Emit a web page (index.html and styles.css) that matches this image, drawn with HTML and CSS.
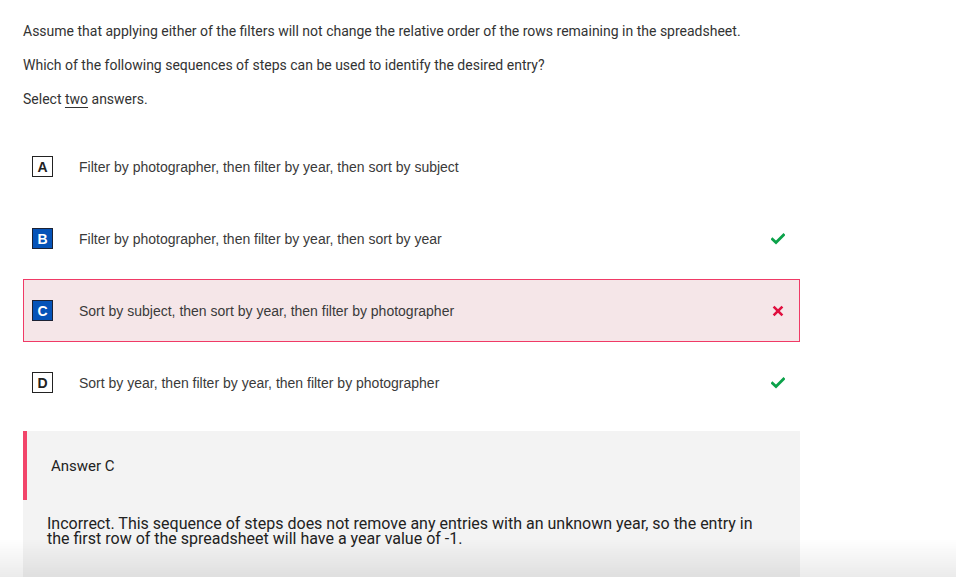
FILE: index.html
```html
<!DOCTYPE html>
<html>
<head>
<meta charset="utf-8">
<link rel="stylesheet" href="styles.css">
</head>
<body>
<div class="page">
  <div class="question">
    <p>Assume that applying either of the filters will not change the relative order of the rows remaining in the spreadsheet.</p>
    <p>Which of the following sequences of steps can be used to identify the desired entry?</p>
    <p>Select <span class="ul">two</span> answers.</p>
  </div>
  <div class="options">
    <div class="option">
      <span class="badge">A</span>
      <span class="otext">Filter by photographer, then filter by year, then sort by subject</span>
    </div>
    <div class="option">
      <span class="badge selected">B</span>
      <span class="otext">Filter by photographer, then filter by year, then sort by year</span>
      <svg class="mark" width="14" height="12" viewBox="0 0 14 12"><path d="M1.5 6.2 L5 9.5 L12.5 2" fill="none" stroke="#0ba24a" stroke-width="2.8" stroke-linecap="square"/></svg>
    </div>
    <div class="option wrong">
      <span class="badge selected">C</span>
      <span class="otext">Sort by subject, then sort by year, then filter by photographer</span>
      <svg class="mark" width="14" height="12" viewBox="0 0 14 12"><path d="M2.6 1.6 L11.4 10.4 M11.4 1.6 L2.6 10.4" fill="none" stroke="#e0103f" stroke-width="2.6"/></svg>
    </div>
    <div class="option">
      <span class="badge">D</span>
      <span class="otext">Sort by year, then filter by year, then filter by photographer</span>
      <svg class="mark" width="14" height="12" viewBox="0 0 14 12"><path d="M1.5 6.2 L5 9.5 L12.5 2" fill="none" stroke="#0ba24a" stroke-width="2.8" stroke-linecap="square"/></svg>
    </div>
  </div>
  <div class="feedback">
    <div class="fb-head">Answer C</div>
    <div class="fb-body">Incorrect. This sequence of steps does not remove any entries with an unknown year, so the entry in the first row of the spreadsheet will have a year value of -1.</div>
  </div>
</div>
<div class="shade"></div>
</body>
</html>
```
FILE: styles.css
```css
html, body {
  margin: 0;
  padding: 0;
  background: #ffffff;
}
body {
  font-family: Roboto, "Liberation Sans", Arial, sans-serif;
  color: #333333;
  overflow: hidden;
}
.page {
  padding: 21px 0 0 23px;
  width: 777px;
}
.question p {
  margin: 0 0 14px 0;
  font-size: 14px;
  line-height: 20px;
  color: #333333;
}
.ul {
  text-decoration: underline;
  text-underline-offset: 3px;
}
.options {
  margin-top: 26px;
}
.option {
  display: flex;
  align-items: center;
  height: 63px;
  box-sizing: border-box;
  border: 1px solid transparent;
  padding: 0 14px 0 8px;
  margin-bottom: 9px;
}
.option.wrong {
  background: #f5e6e8;
  border-color: #f03a66;
}
.badge {
  width: 21px;
  height: 21px;
  box-sizing: border-box;
  border: 1px solid #222222;
  display: flex;
  align-items: center;
  justify-content: center;
  font-family: "Liberation Sans", Arial, sans-serif;
  font-weight: bold;
  font-size: 14px;
  color: #222222;
  background: #ffffff;
  margin-right: 26px;
  flex: none;
}
.badge.selected {
  background: #0553b8;
  color: #ffffff;
  border-color: #1c2233;
}
.otext {
  font-family: "Liberation Sans", Arial, sans-serif;
  font-size: 14px;
  color: #3a3a3a;
  flex: 1;
}
.mark {
  flex: none;
}
.feedback {
  margin-top: 17px;
  background: #f3f3f3;
  height: 200px;
}
.fb-head {
  height: 69px;
  border-left: 4px solid #f2456a;
  padding-left: 24px;
  display: flex;
  align-items: center;
  font-size: 15px;
  color: #222222;
}
.fb-body {
  padding: 16px 24px 0 24px;
  font-size: 16px;
  line-height: 15px;
  color: #222222;
}
.shade {
  position: fixed;
  left: 0;
  right: 0;
  bottom: 0;
  height: 38px;
  background: linear-gradient(to bottom, rgba(0,0,0,0), rgba(0,0,0,0.08));
  pointer-events: none;
}
```
